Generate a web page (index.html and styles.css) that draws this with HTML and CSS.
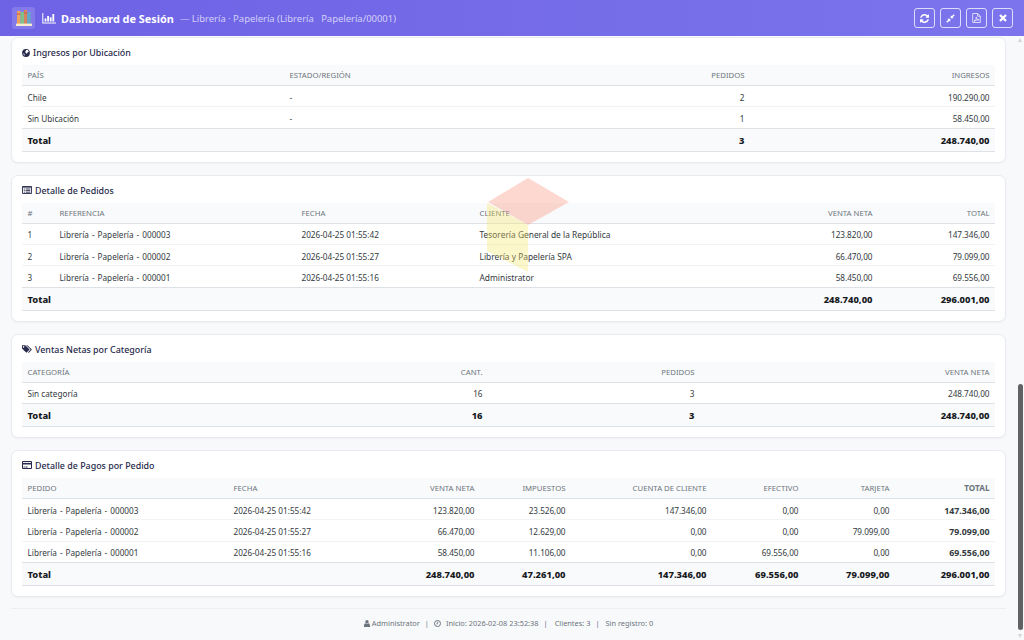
FILE: index.html
```html
<!DOCTYPE html>
<html lang="es">
<head>
    <meta charset="UTF-8">
    <meta name="viewport" content="width=device-width, initial-scale=1.0">
    <title>Dashboard de Sesión</title>
    <link rel="stylesheet" href="styles.css">
</head>
<body>
    <header class="topbar">
        <div class="logo">
            <svg width="16" height="18" viewBox="0 0 16 18">
                <rect x="1" y="2" width="3.4" height="13" fill="#f0a35c"/>
                <rect x="4.4" y="3" width="3.6" height="12" fill="#7fc08c"/>
                <rect x="8" y="1" width="3.2" height="14" fill="#d9825f"/>
                <rect x="11.2" y="3" width="3.4" height="12" fill="#63a8c4"/>
                <path d="M1 5h3.4M8 4h3.2" stroke="#c9534a"/>
                <rect x="0" y="14.6" width="16" height="2.4" fill="#f8ead0"/>
            </svg>
        </div>
        <svg class="chart-icon" width="14" height="11" viewBox="0 0 14 11" fill="#fff">
            <path d="M.3 0h1v9.600H14v1H.3zM2.600 5.600h1.800v3H2.600zM5.200 3h1.800v5.600H5.200zM7.800 4.200h1.800v4.400H7.800zM10.400 1h1.800v7.600h-1.800z"/>
        </svg>
        <h1>Dashboard de Sesión</h1>
        <span class="session">— Librería · Papelería (Librería &nbsp; Papelería/00001)</span>
        <div class="actions">
            <button>
                <svg width="9" height="9" viewBox="0 0 1536 1536" fill="#fff"><path d="M1511 928q0 5-1 7-64 268-268 434.500T764 1536q-146 0-282.500-55T238 1324l-129 129q-19 19-45 19t-45-19-19-45V960q0-26 19-45t45-19h448q26 0 45 19t19 45-19 45l-137 137q71 66 161 102t187 36q134 0 250-65t186-179q11-17 53-117 8-23 30-23h192q13 0 22.500 9.500t9.500 22.500zm25-800v448q0 26-19 45t-45 19h-448q-26 0-45-19t-19-45 19-45l138-138Q969 256 768 256q-134 0-250 65T332 500q-11 17-53 117-8 23-30 23H50q-13 0-22.500-9.500T18 608v-7q65-268 270-434.500T768 0q146 0 284 55.500T1297 212l130-129q19-19 45-19t45 19 19 45z"/></svg>
            </button>
            <button>
                <svg width="9" height="9" viewBox="0 0 10 10" fill="#fff"><path d="M4.800 5.200v3.400L3.700 7.500 1.500 9.700.3 8.500 2.500 6.300 1.400 5.200zM5.200 4.800V1.400L6.300 2.500 8.500.3l1.200 1.200L7.500 3.700 8.600 4.800z"/></svg>
            </button>
            <button>
                <svg width="9" height="10" viewBox="0 0 9 10" fill="none" stroke="#fff" stroke-width=".7"><path d="M.7.500h5L8.300 3v6.500H.7zM5.500.5v2.700h2.800M2 8.300c1.500-.5 2.300-2.300 2.200-4.300.3 2 1.300 2.900 3 2.900-2 0-3.700.3-5.200 1.400z"/></svg>
            </button>
            <button>
                <svg width="8" height="8" viewBox="0 0 8 8" stroke="#fff" stroke-width="2.300"><path d="M1 1l6 6M7 1L1 7"/></svg>
            </button>
        </div>
    </header>

    <main class="content">
        <section class="card">
            <h2>
                <svg width="8" height="8" viewBox="0 0 8 8"><circle cx="4" cy="4" r="3.900" fill="#272a4b"/><path d="M4.200.9l1.700.2 1 1.600-1.300.5-.6 1.500-1.300-.7-.5-1.300zM1.100 4.500l1.300.3.2 1.500-.4.5z" fill="#fff"/></svg>
                Ingresos por Ubicación
            </h2>
            <table class="locations">
                <colgroup><col class="c1"><col class="c2"><col class="c3"><col></colgroup>
                <thead>
                    <tr><th>País</th><th>Estado/Región</th><th class="num">Pedidos</th><th class="num">Ingresos</th></tr>
                </thead>
                <tbody>
                    <tr><td>Chile</td><td>-</td><td class="num">2</td><td class="num">190.290,00</td></tr>
                    <tr><td>Sin Ubicación</td><td>-</td><td class="num">1</td><td class="num">58.450,00</td></tr>
                </tbody>
                <tfoot>
                    <tr><td>Total</td><td></td><td class="num">3</td><td class="num">248.740,00</td></tr>
                </tfoot>
            </table>
        </section>

        <section class="card">
            <h2>
                <svg width="10" height="8" viewBox="0 0 10 8" fill="none" stroke="#272a4b"><path d="M.5.500h9v7h-9zM.5 1.200h9M1.800 3h1M3.600 3h4.700M1.800 4.600h1M3.600 4.600h4.700M1.800 6.200h1M3.600 6.200h4.700" stroke-width=".9"/></svg>
                Detalle de Pedidos
            </h2>
            <table class="orders">
                <colgroup><col class="c1"><col class="c2"><col class="c3"><col class="c4"><col class="c5"><col></colgroup>
                <thead>
                    <tr><th>#</th><th>Referencia</th><th>Fecha</th><th>Cliente</th><th class="num">Venta Neta</th><th class="num">Total</th></tr>
                </thead>
                <tbody>
                    <tr><td>1</td><td class="ref">Librería - Papelería - 000003</td><td>2026-04-25 01:55:42</td><td class="client">Tesorería General de la República</td><td class="num">123.820,00</td><td class="num">147.346,00</td></tr>
                    <tr><td>2</td><td class="ref">Librería - Papelería - 000002</td><td>2026-04-25 01:55:27</td><td class="client">Librería y Papelería SPA</td><td class="num">66.470,00</td><td class="num">79.099,00</td></tr>
                    <tr><td>3</td><td class="ref">Librería - Papelería - 000001</td><td>2026-04-25 01:55:16</td><td class="client">Administrator</td><td class="num">58.450,00</td><td class="num">69.556,00</td></tr>
                </tbody>
                <tfoot>
                    <tr><td colspan="4">Total</td><td class="num">248.740,00</td><td class="num">296.001,00</td></tr>
                </tfoot>
            </table>
        </section>

        <section class="card">
            <h2>
                <svg width="10" height="8" viewBox="0 0 10 8" fill="#272a4b"><path fill-rule="evenodd" d="M0 .3h3.300L7.600 4.500 4.400 7.800 0 3.500zM1.600 1.100a.7.700 0 1 0 .01 0z"/><path d="M4.300.3h1L9.900 4.600 6.700 7.900l-.6-.6 2.500-2.800z"/></svg>
                Ventas Netas por Categoría
            </h2>
            <table class="categories">
                <colgroup><col class="c1"><col class="c2"><col class="c3"><col></colgroup>
                <thead>
                    <tr><th>Categoría</th><th class="num">Cant.</th><th class="num">Pedidos</th><th class="num">Venta Neta</th></tr>
                </thead>
                <tbody>
                    <tr><td>Sin categoría</td><td class="num">16</td><td class="num">3</td><td class="num">248.740,00</td></tr>
                </tbody>
                <tfoot>
                    <tr><td>Total</td><td class="num">16</td><td class="num">3</td><td class="num">248.740,00</td></tr>
                </tfoot>
            </table>
        </section>

        <section class="card">
            <h2>
                <svg width="10" height="8" viewBox="0 0 10 8" fill="none" stroke="#272a4b"><path d="M.5.500h9v7h-9z"/><path d="M.5 2.700h9" stroke-width="1.600"/><path d="M1.500 6h1.300M3.500 6h2"/></svg>
                Detalle de Pagos por Pedido
            </h2>
            <table class="payments">
                <colgroup><col class="c1"><col class="c2"><col class="c3"><col class="c4"><col class="c5"><col class="c6"><col class="c7"><col></colgroup>
                <thead>
                    <tr><th>Pedido</th><th>Fecha</th><th class="num">Venta Neta</th><th class="num">Impuestos</th><th class="num">Cuenta de Cliente</th><th class="num">Efectivo</th><th class="num">Tarjeta</th><th class="num strong">Total</th></tr>
                </thead>
                <tbody>
                    <tr><td class="ref">Librería - Papelería - 000003</td><td>2026-04-25 01:55:42</td><td class="num">123.820,00</td><td class="num">23.526,00</td><td class="num">147.346,00</td><td class="num">0,00</td><td class="num">0,00</td><td class="num strong">147.346,00</td></tr>
                    <tr><td class="ref">Librería - Papelería - 000002</td><td>2026-04-25 01:55:27</td><td class="num">66.470,00</td><td class="num">12.629,00</td><td class="num">0,00</td><td class="num">0,00</td><td class="num">79.099,00</td><td class="num strong">79.099,00</td></tr>
                    <tr><td class="ref">Librería - Papelería - 000001</td><td>2026-04-25 01:55:16</td><td class="num">58.450,00</td><td class="num">11.106,00</td><td class="num">0,00</td><td class="num">69.556,00</td><td class="num">0,00</td><td class="num strong">69.556,00</td></tr>
                </tbody>
                <tfoot>
                    <tr><td colspan="2">Total</td><td class="num">248.740,00</td><td class="num">47.261,00</td><td class="num">147.346,00</td><td class="num">69.556,00</td><td class="num">79.099,00</td><td class="num">296.001,00</td></tr>
                </tfoot>
            </table>
        </section>

        <footer class="footer">
            <svg width="6" height="7" viewBox="0 0 6 7" fill="#6c757d"><circle cx="3" cy="1.800" r="1.700"/><path d="M0 7V5.300Q.3 3.400 1.600 3.300q1.400 1 2.800 0Q5.700 3.400 6 5.300V7z"/></svg>
            <span class="user">Administrator</span>
            <span class="sep">|</span>
            <svg width="7" height="7" viewBox="0 0 7 7" fill="none" stroke="#6c757d"><circle cx="3.500" cy="3.500" r="3"/><path d="M3.700 1.600v2.200H2.200" stroke-width=".8"/></svg>
            <span class="start">Inicio: 2026-02-08 23:52:38</span>
            <span class="sep">|</span>
            <span class="clients">Clientes: 3</span>
            <span class="sep">|</span>
            <span class="unregistered">Sin registro: 0</span>
        </footer>
    </main>

    <svg class="watermark" width="82" height="96" viewBox="0 0 82 96">
        <path d="M41 0l41 24-41 23L1 24z" fill="#fb8a72"/>
        <path d="M0 25l41 22v47L0 73z" fill="#f7e463"/>
    </svg>

    <div class="scrollbar">
        <span class="arrow up"></span>
        <span class="thumb"></span>
        <span class="arrow down"></span>
    </div>
</body>
</html>
```

FILE: styles.css
```css
* {
    box-sizing: border-box;
}
body {
    margin: 0;
    height: 640px;
    overflow: hidden;
    position: relative;
    font-family: "Noto Sans", "Open Sans", sans-serif;
    font-size: 8.2px;
    color: #343a40;
    background-color: #f8f9fb;
}
.topbar {
    display: flex;
    align-items: center;
    height: 36px;
    padding: 0 11px 0 12px;
    background: linear-gradient(90deg, #6e62e5, #7b74ec);
    color: #fff;
}
.logo {
    display: flex;
    align-items: center;
    justify-content: center;
    width: 23px;
    height: 22px;
    border-radius: 3px;
    background-color: rgba(255, 255, 255, 0.15);
}
.chart-icon {
    margin: 1px 5px 0 7px;
}
h1 {
    margin: 0;
    font-size: 10.9px;
    font-weight: 700;
    white-space: nowrap;
}
.session {
    margin-left: 6px;
    font-size: 9.45px;
    white-space: nowrap;
    color: rgba(255, 255, 255, 0.7);
}
.actions {
    display: flex;
    gap: 5px;
    margin-left: auto;
}
button {
    display: flex;
    align-items: center;
    justify-content: center;
    width: 21px;
    height: 20px;
    padding: 0;
    border: 1px solid rgba(255, 255, 255, 0.75);
    border-radius: 3px;
    background: transparent;
}
.content {
    display: flex;
    flex-direction: column;
    gap: 12px;
    width: 1006px;
    padding: 1px 0 0 11px;
}
.card {
    padding: 8px 10px 10px;
    border: 1px solid #e9ebee;
    border-radius: 7px;
    background-color: #fff;
    box-shadow: 0 1px 2px rgba(0, 0, 0, 0.04);
}
h2 {
    display: flex;
    align-items: center;
    gap: 3px;
    height: 13px;
    margin: 0 0 6px;
    font-size: 8.9px;
    font-weight: 500;
    color: #272a4b;
}
table {
    width: 973px;
    table-layout: fixed;
    border-collapse: separate;
    border-spacing: 0;
}
th, td {
    height: 21.33px;
    padding: 3px 5.5px 0;
    line-height: 12px;
    text-align: left;
    white-space: nowrap;
    border-bottom: 1px solid #f1f3f5;
}
th {
    height: 21px;
    padding-top: 0;
    font-size: 7.75px;
    font-weight: 400;
    text-transform: uppercase;
    color: #6c757d;
    background-color: #f9fafb;
    border-bottom-color: #dee2e6;
}
.ref {
    word-spacing: 0.9px;
}
.client {
    font-size: 8.4px;
}
.num {
    text-align: right;
}
tbody .num {
    letter-spacing: -0.04px;
}
th.strong {
    font-size: 8.2px;
    font-weight: 700;
}
tbody td.strong {
    font-size: 8.8px;
    font-weight: 700;
    letter-spacing: 0;
}
tbody tr:last-child td {
    border-bottom-color: #dee2e6;
}
tfoot td {
    height: 23px;
    font-size: 9.4px;
    font-weight: 800;
    color: #16191d;
    background-color: #f9fafc;
    border-bottom-color: #dee2e6;
}

/* column widths */
.locations .c1 { width: 262px; }
.locations .c2 { width: 340px; }
.locations .c3 { width: 126px; }

.orders .c1 { width: 32px; }
.orders .c2 { width: 242px; }
.orders .c3 { width: 178px; }
.orders .c4 { width: 260px; }
.orders .c5 { width: 144px; }

.categories .c1 { width: 300px; }
.categories .c2 { width: 166px; }
.categories .c3 { width: 212px; }

.payments .c1 { width: 206px; }
.payments .c2 { width: 120px; }
.payments .c3 { width: 132px; }
.payments .c4 { width: 91px; }
.payments .c5 { width: 141px; }
.payments .c6 { width: 92px; }
.payments .c7 { width: 91px; }

.footer {
    display: flex;
    align-items: center;
    justify-content: center;
    height: 30px;
    margin-top: -1px;
    border-top: 1px solid #eceef0;
    font-size: 7.4px;
    color: #6c757d;
}
.user {
    margin-left: 2px;
}
.sep {
    margin: 0 5px;
}
.start {
    margin-left: 5px;
}
.clients {
    margin-left: 2px;
}
.unregistered {
    margin-left: 1px;
}
.watermark {
    position: absolute;
    left: 487px;
    top: 178px;
    opacity: 0.33;
}
.scrollbar {
    position: absolute;
    top: 38px;
    right: 1px;
    bottom: 2px;
    width: 6px;
    display: flex;
    flex-direction: column;
    justify-content: flex-end;
    align-items: center;
}
.thumb {
    width: 5px;
    height: 246px;
    margin-bottom: 4px;
    border-radius: 3px;
    background-color: #606264;
}
.arrow {
    border: 2.5px solid transparent;
}
.up {
    margin-bottom: auto;
    border-top: 0;
    border-bottom: 4px solid #d3d5d8;
}
.down {
    border-bottom: 0;
    border-top: 4px solid #d3d5d8;
}
```
